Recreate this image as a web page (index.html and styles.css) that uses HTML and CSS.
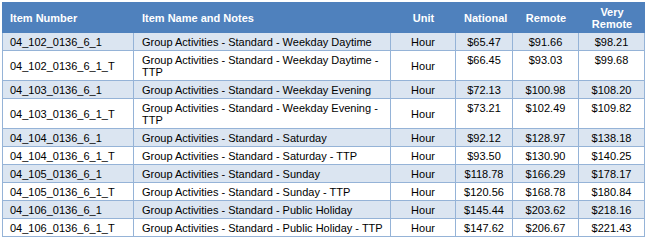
FILE: index.html
```html
<!DOCTYPE html>
<html>
<head>
<meta charset="utf-8">
<link rel="stylesheet" href="styles.css">
</head>
<body>
<table class="rates">
  <colgroup>
    <col class="c-num"><col class="c-name"><col class="c-unit"><col class="c-nat"><col class="c-rem"><col class="c-vrem">
  </colgroup>
  <thead>
    <tr>
      <th class="left first">Item Number</th>
      <th class="left">Item Name and Notes</th>
      <th>Unit</th>
      <th>National</th>
      <th>Remote</th>
      <th>Very Remote</th>
    </tr>
  </thead>
  <tbody>
    <tr class="alt"><td class="mid first">04_102_0136_6_1</td><td class="top">Group Activities - Standard - Weekday Daytime</td><td class="mid ctr">Hour</td><td class="ctr top">$65.47</td><td class="ctr top">$91.66</td><td class="ctr top">$98.21</td></tr>
    <tr><td class="mid first">04_102_0136_6_1_T</td><td class="top">Group Activities - Standard - Weekday Daytime - TTP</td><td class="mid ctr">Hour</td><td class="ctr top">$66.45</td><td class="ctr top">$93.03</td><td class="ctr top">$99.68</td></tr>
    <tr class="alt"><td class="mid first">04_103_0136_6_1</td><td class="top">Group Activities - Standard - Weekday Evening</td><td class="mid ctr">Hour</td><td class="ctr top">$72.13</td><td class="ctr top">$100.98</td><td class="ctr top">$108.20</td></tr>
    <tr><td class="mid first">04_103_0136_6_1_T</td><td class="top">Group Activities - Standard - Weekday Evening - TTP</td><td class="mid ctr">Hour</td><td class="ctr top">$73.21</td><td class="ctr top">$102.49</td><td class="ctr top">$109.82</td></tr>
    <tr class="alt"><td class="mid first">04_104_0136_6_1</td><td class="top">Group Activities - Standard - Saturday</td><td class="mid ctr">Hour</td><td class="ctr top">$92.12</td><td class="ctr top">$128.97</td><td class="ctr top">$138.18</td></tr>
    <tr><td class="mid first">04_104_0136_6_1_T</td><td class="top">Group Activities - Standard - Saturday - TTP</td><td class="mid ctr">Hour</td><td class="ctr top">$93.50</td><td class="ctr top">$130.90</td><td class="ctr top">$140.25</td></tr>
    <tr class="alt"><td class="mid first">04_105_0136_6_1</td><td class="top">Group Activities - Standard - Sunday</td><td class="mid ctr">Hour</td><td class="ctr top">$118.78</td><td class="ctr top">$166.29</td><td class="ctr top">$178.17</td></tr>
    <tr><td class="mid first">04_105_0136_6_1_T</td><td class="top">Group Activities - Standard - Sunday - TTP</td><td class="mid ctr">Hour</td><td class="ctr top">$120.56</td><td class="ctr top">$168.78</td><td class="ctr top">$180.84</td></tr>
    <tr class="alt"><td class="mid first">04_106_0136_6_1</td><td class="top">Group Activities - Standard - Public Holiday</td><td class="mid ctr">Hour</td><td class="ctr top">$145.44</td><td class="ctr top">$203.62</td><td class="ctr top">$218.16</td></tr>
    <tr><td class="mid first">04_106_0136_6_1_T</td><td class="top">Group Activities - Standard - Public Holiday - TTP</td><td class="mid ctr">Hour</td><td class="ctr top">$147.62</td><td class="ctr top">$206.67</td><td class="ctr top">$221.43</td></tr>
  </tbody>
</table>
</body>
</html>
```
FILE: styles.css
```css
html, body {
  margin: 0;
  padding: 0;
  background: #ffffff;
}
body {
  padding: 2px;
  font-family: "Liberation Sans", Arial, sans-serif;
  font-size: 11px;
  line-height: 12px;
  color: #000000;
}
.rates {
  border-collapse: collapse;
  table-layout: fixed;
  width: 642px;
}
.c-num { width: 131px; }
.c-name { width: 257px; }
.c-unit { width: 65px; }
.c-nat { width: 57px; }
.c-rem { width: 66px; }
.c-vrem { width: 66px; }
.rates th {
  background: #4f81bd;
  color: #ffffff;
  font-weight: bold;
  text-align: center;
  vertical-align: middle;
  padding: 3px 7px 2px 8px;
  border: 1px solid #4f81bd;
  height: 24px;
}
.rates th.left { text-align: left; }
.rates th.first, .rates td.first { padding-left: 7px; }
.rates td {
  border: 1px solid #95b3d7;
  padding: 3px 7px 2px 8px;
  text-align: left;
}
.rates tr.alt td { background: #dbe5f1; }
.rates td.top { vertical-align: top; }
.rates td.mid { vertical-align: middle; }
.rates td.ctr { text-align: center; padding-left: 2px; padding-right: 2px; }
```
